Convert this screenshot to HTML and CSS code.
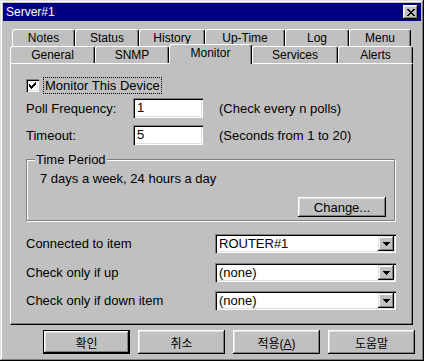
FILE: index.html
```html
<!DOCTYPE html>
<html lang="ko">
<head>
  <meta charset="UTF-8" />
  <title>Server#1</title>
  <link rel="stylesheet" href="styles.css">
</head>
<body>

  <div class="window">

    <!-- barra de título -->
    <div class="titlebar">
      <span>Server#1</span>
      <button class="close-btn">
        <svg width="8" height="7" viewBox="0 0 8 7" shape-rendering="crispEdges">
          <path d="M0 0h2v1h-2z M6 0h2v1h-2z M1 1h2v1h-2z M5 1h2v1h-2z M2 2h4v1h-4z M3 3h2v1h-2z M2 4h4v1h-4z M1 5h2v1h-2z M5 5h2v1h-2z M0 6h2v1h-2z M6 6h2v1h-2z" fill="#000"/>
        </svg>
      </button>
    </div>

    <!-- abas em duas linhas -->
    <div class="tabs">
      <div class="tab-row back">
        <div class="tab tab-notes">Notes</div>
        <div class="tab tab-status">Status</div>
        <div class="tab tab-history">History</div>
        <div class="tab tab-uptime">Up-Time</div>
        <div class="tab tab-log">Log</div>
        <div class="tab tab-menu">Menu</div>
      </div>
      <div class="tab-row front">
        <div class="tab tab-general">General</div>
        <div class="tab tab-snmp">SNMP</div>
        <div class="tab tab-monitor selected">Monitor</div>
        <div class="tab tab-services">Services</div>
        <div class="tab tab-alerts">Alerts</div>
      </div>
    </div>

    <div class="panel">

      <div class="check-row">
        <span class="checkbox">
          <svg width="7" height="7" viewBox="0 0 7 7" shape-rendering="crispEdges">
            <path d="M6 0h1v1h-1z M5 1h2v1h-2z M0 2h1v1h-1z M4 2h3v1h-3z M0 3h2v1h-2z M3 3h3v1h-3z M0 4h5v1h-5z M1 5h3v1h-3z M2 6h1v1h-1z" fill="#000"/>
          </svg>
        </span>
        <span class="check-label">Monitor This Device</span>
      </div>

      <div class="field-row">
        <label>Poll Frequency:</label>
        <div class="textbox">1</div>
        <span>(Check every n polls)</span>
      </div>

      <div class="field-row">
        <label>Timeout:</label>
        <div class="textbox">5</div>
        <span>(Seconds from 1 to 20)</span>
      </div>

      <fieldset class="group">
        <legend>Time Period</legend>
        <div class="period-text">7 days a week, 24 hours a day</div>
        <div class="period-actions">
          <button class="btn btn-change">Change...</button>
        </div>
      </fieldset>

      <div class="combo-row first">
        <label>Connected to item</label>
        <div class="combo">
          <span>ROUTER#1</span>
          <span class="combo-btn">
            <svg width="7" height="4" viewBox="0 0 7 4" shape-rendering="crispEdges"><path d="M0 0h7v1h-7z M1 1h5v1h-5z M2 2h3v1h-3z M3 3h1v1h-1z" fill="#000"/></svg>
          </span>
        </div>
      </div>

      <div class="combo-row second">
        <label>Check only if up</label>
        <div class="combo">
          <span>(none)</span>
          <span class="combo-btn">
            <svg width="7" height="4" viewBox="0 0 7 4" shape-rendering="crispEdges"><path d="M0 0h7v1h-7z M1 1h5v1h-5z M2 2h3v1h-3z M3 3h1v1h-1z" fill="#000"/></svg>
          </span>
        </div>
      </div>

      <div class="combo-row third">
        <label>Check only if down item</label>
        <div class="combo">
          <span>(none)</span>
          <span class="combo-btn">
            <svg width="7" height="4" viewBox="0 0 7 4" shape-rendering="crispEdges"><path d="M0 0h7v1h-7z M1 1h5v1h-5z M2 2h3v1h-3z M3 3h1v1h-1z" fill="#000"/></svg>
          </span>
        </div>
      </div>

    </div>

    <!-- botões do rodapé -->
    <div class="buttons">
      <button class="btn btn-default">확인</button>
      <button class="btn">취소</button>
      <button class="btn">적용(<u>A</u>)</button>
      <button class="btn">도움말</button>
    </div>

  </div>

</body>
</html>
```

FILE: styles.css
```css
html, body {
  margin: 0; padding: 0;
  background: #c0c0c0;
}

body {
  font-family: "Liberation Sans", "Noto Sans CJK KR", sans-serif;
  font-size: 13px;
  color: #000;
}

.window {
  width: 424px;
  height: 361px;
  box-sizing: border-box;
  padding: 3px;
  display: flex;
  flex-direction: column;
  background: #c0c0c0;
  box-shadow: inset -1px -1px #000, inset 1px 1px #dfdfdf,
              inset -2px -2px #808080, inset 2px 2px #fff;
}

/* barra de título */
.titlebar {
  flex: none;
  height: 18px;
  background: #000080;
  color: #fff;
  font-size: 12px;
  display: flex;
  align-items: center;
  justify-content: space-between;
  padding: 0 3px 0 3px;
}

.close-btn {
  width: 15px;
  height: 14px;
  padding: 0;
  border: none;
  background: #c0c0c0;
  display: flex;
  align-items: center;
  justify-content: center;
  box-shadow: inset -1px -1px #000, inset 1px 1px #fff,
              inset -2px -2px #808080, inset 2px 2px #dfdfdf;
}

/* abas */
.tabs {
  flex: none;
  margin-top: 8px;
}

.tab-row {
  display: flex;
  align-items: flex-end;
  height: 17px;
}

.tab-row.back { padding-left: 9px; }
.tab-row.front { padding-left: 7px; }

.tab {
  box-sizing: border-box;
  height: 17px;
  background: #c0c0c0;
  border: 1px solid #fff;
  border-right-color: #000;
  border-bottom: none;
  border-radius: 3px 3px 0 0;
  box-shadow: inset -1px 0 #808080;
  font-size: 12px;
  display: flex;
  align-items: center;
  justify-content: center;
}

.tab.selected {
  height: 20px;
  margin-bottom: -1px;
  padding-bottom: 3px;
  position: relative;
  z-index: 1;
}

.tab-notes { width: 63px; }
.tab-status { width: 64px; }
.tab-history { width: 66px; }
.tab-uptime { width: 80px; }
.tab-log { width: 64px; }
.tab-menu { width: 62px; }

.tab-general { width: 85px; }
.tab-snmp { width: 74px; }
.tab-monitor { width: 83px; }
.tab-services { width: 86px; }
.tab-alerts { width: 75px; }

/* painel da aba */
.panel {
  flex: none;
  height: 262px;
  box-sizing: border-box;
  margin: 0 8px 0 7px;
  border: 1px solid #fff;
  border-right-color: #000;
  border-bottom-color: #000;
  box-shadow: inset -1px -1px #808080;
  padding: 13px 16px 0 15px;
  display: flex;
  flex-direction: column;
}

.check-row {
  display: flex;
  align-items: center;
  height: 16px;
  margin-bottom: 5px;
}

.checkbox {
  width: 13px;
  height: 13px;
  box-sizing: border-box;
  background: #fff;
  margin-right: 5px;
  display: flex;
  align-items: center;
  justify-content: center;
  box-shadow: inset 1px 1px #808080, inset 2px 2px #000,
              inset -1px -1px #fff, inset -2px -2px #dfdfdf;
}

.check-label {
  outline: 1px dotted #000;
  padding: 0 1px;
  line-height: 15px;
}

.field-row {
  display: flex;
  align-items: center;
  height: 20px;
  margin-bottom: 7px;
}

.field-row label {
  width: 107px;
}

.textbox {
  width: 70px;
  height: 20px;
  box-sizing: border-box;
  padding: 0 4px;
  line-height: 20px;
  background: #fff;
  margin-right: 16px;
  box-shadow: inset 1px 1px #808080, inset 2px 2px #000,
              inset -1px -1px #fff, inset -2px -2px #dfdfdf;
}

/* grupo Time Period */
.group {
  margin: 0 1px 0 0;
  padding: 0 8px 3px 13px;
  border: 1px solid #808080;
  box-shadow: inset 1px 1px #fff, 1px 1px #fff;
  min-width: 0;
  display: flex;
  flex-direction: column;
}

.group legend {
  margin-left: -5px;
  padding: 0 1px;
  line-height: 15px;
  background: #c0c0c0;
}

.period-text {
  margin-top: 4px;
  line-height: 15px;
}

.period-actions {
  display: flex;
  justify-content: flex-end;
  margin-top: 11px;
}

.combo-row {
  display: flex;
  align-items: center;
  height: 19px;
}

.combo-row.first { margin-top: 13px; }
.combo-row.second { margin-top: 10px; }
.combo-row.third { margin-top: 9px; }

.combo {
  margin-left: auto;
  width: 181px;
  height: 19px;
  box-sizing: border-box;
  padding: 2px;
  background: #fff;
  display: flex;
  align-items: center;
  box-shadow: inset 1px 1px #808080, inset 2px 2px #000,
              inset -1px -1px #fff, inset -2px -2px #dfdfdf;
}

.combo span:first-child {
  flex: 1;
  padding-left: 2px;
}

.combo-btn {
  width: 16px;
  height: 15px;
  background: #c0c0c0;
  display: flex;
  align-items: center;
  justify-content: center;
  box-shadow: inset -1px -1px #000, inset 1px 1px #dfdfdf,
              inset -2px -2px #808080, inset 2px 2px #fff;
}

/* botões */
.btn {
  width: 87px;
  height: 24px;
  padding: 0;
  border: none;
  background: #c0c0c0;
  color: #000;
  font-family: "Liberation Sans", "Noto Sans CJK KR", sans-serif;
  font-size: 12px;
  box-shadow: inset -1px -1px #000, inset 1px 1px #fff,
              inset -2px -2px #808080, inset 2px 2px #dfdfdf;
}

.btn-change {
  width: 88px;
  height: 20px;
  font-size: 13px;
}

.btn-default {
  box-shadow: inset 0 0 0 1px #000, inset -2px -2px #000, inset 2px 2px #fff,
              inset -3px -3px #808080, inset 3px 3px #dfdfdf;
}

.buttons {
  flex: none;
  display: flex;
  justify-content: flex-end;
  gap: 8px;
  margin-top: 5px;
  padding-right: 6px;
}
```
